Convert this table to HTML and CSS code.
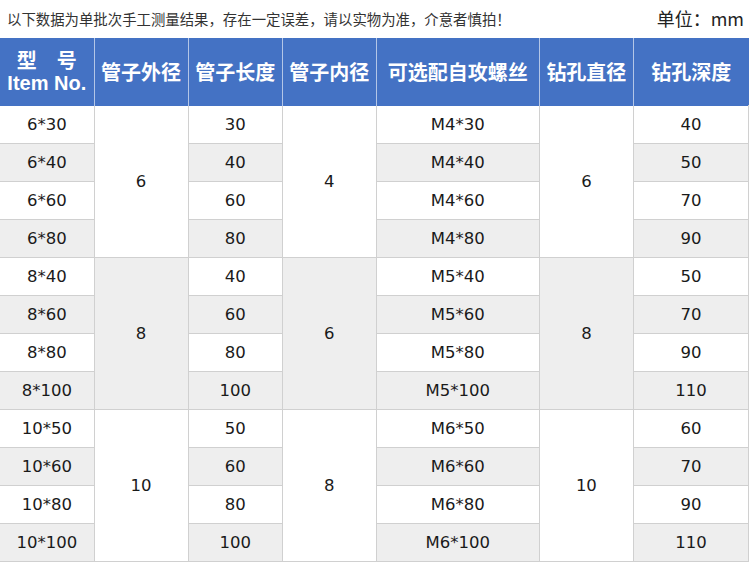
FILE: index.html
```html
<!DOCTYPE html>
<html lang="zh">
<head>
<meta charset="utf-8">
<link rel="stylesheet" href="styles.css">
</head>
<body>
<div class="page">
  <div class="topbar">
    <span class="note">以下数据为单批次手工测量结果，存在一定误差，请以实物为准，介意者慎拍！</span>
    <span class="unit">单位：mm</span>
  </div>
  <table class="spec">
    <colgroup>
      <col class="c1"><col class="c2"><col class="c3"><col class="c4"><col class="c5"><col class="c6"><col class="c7">
    </colgroup>
    <thead>
      <tr>
        <th><span class="cn">型　号</span><span class="en">Item No.</span></th>
        <th>管子外径</th>
        <th>管子长度</th>
        <th>管子内径</th>
        <th>可选配自攻螺丝</th>
        <th>钻孔直径</th>
        <th>钻孔深度</th>
      </tr>
    </thead>
    <tbody>
      <tr><td>6*30</td><td rowspan="4" class="m w">6</td><td>30</td><td rowspan="4" class="m w">4</td><td>M4*30</td><td rowspan="4" class="m w">6</td><td>40</td></tr>
      <tr class="g"><td>6*40</td><td>40</td><td>M4*40</td><td>50</td></tr>
      <tr><td>6*60</td><td>60</td><td>M4*60</td><td>70</td></tr>
      <tr class="g"><td>6*80</td><td>80</td><td>M4*80</td><td>90</td></tr>
      <tr><td>8*40</td><td rowspan="4" class="m gr">8</td><td>40</td><td rowspan="4" class="m gr">6</td><td>M5*40</td><td rowspan="4" class="m gr">8</td><td>50</td></tr>
      <tr class="g"><td>8*60</td><td>60</td><td>M5*60</td><td>70</td></tr>
      <tr><td>8*80</td><td>80</td><td>M5*80</td><td>90</td></tr>
      <tr class="g"><td>8*100</td><td>100</td><td>M5*100</td><td>110</td></tr>
      <tr><td>10*50</td><td rowspan="4" class="m w">10</td><td>50</td><td rowspan="4" class="m w">8</td><td>M6*50</td><td rowspan="4" class="m w">10</td><td>60</td></tr>
      <tr class="g"><td>10*60</td><td>60</td><td>M6*60</td><td>70</td></tr>
      <tr><td>10*80</td><td>80</td><td>M6*80</td><td>90</td></tr>
      <tr class="g"><td>10*100</td><td>100</td><td>M6*100</td><td>110</td></tr>
    </tbody>
  </table>
</div>
</body>
</html>
```
FILE: styles.css
```css
html, body {
  margin: 0;
  padding: 0;
  background: #ffffff;
}
.page {
  width: 750px;
}
.topbar {
  height: 38px;
  display: flex;
  align-items: center;
  justify-content: space-between;
  padding: 0 6px 0 7px;
  box-sizing: border-box;
  font-family: "Noto Sans CJK SC", "Noto Sans", sans-serif;
}
.note {
  font-size: 14.4px;
  color: #333333;
  margin-top: -2px;
}
.unit {
  font-size: 18px;
  color: #222222;
  margin-top: -2px;
}
.spec {
  border-collapse: collapse;
  table-layout: fixed;
  width: 749px;
}
.c1, .c2, .c3, .c4, .c6 { width: 94px; }
.c5 { width: 163px; }
.c7 { width: 115px; }
.spec th {
  background: #4472c4;
  color: #ffffff;
  height: 67px;
  padding: 0;
  font-family: "Noto Sans CJK SC", sans-serif;
  font-weight: bold;
  font-size: 20px;
  border-left: 1px solid #b4c6e7;
  text-align: center;
  vertical-align: middle;
}
.spec th:first-child { border-left: none; }
.spec th .cn, .spec th .en {
  display: block;
  line-height: 22px;
}
.spec th .en {
  font-family: "Liberation Sans", Arial, sans-serif;
  font-size: 20px;
  margin-top: 1px;
}
.spec td {
  height: 37px;
  padding: 0;
  border: 1px solid #d0d0d0;
  text-align: center;
  vertical-align: middle;
  font-family: "DejaVu Sans", Verdana, sans-serif;
  font-size: 16.5px;
  color: #1a1a1a;
  background: #ffffff;
}
.spec td:first-child { border-left: none; }
.spec tbody tr:first-child td { border-top-color: #4472c4; }
.spec tr.g td { background: #eeeeee; }
.spec td.m.w { background: #ffffff; }
.spec td.m.gr { background: #eeeeee; }
```
